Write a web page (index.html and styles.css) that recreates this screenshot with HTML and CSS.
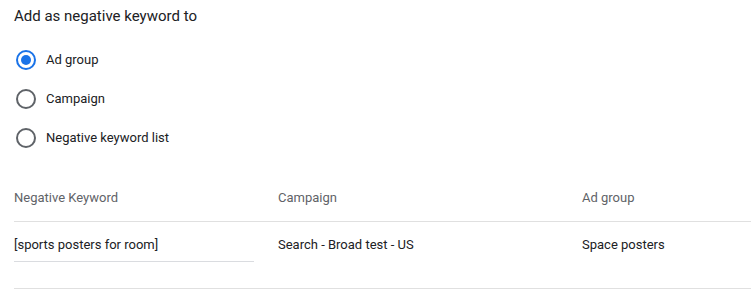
FILE: index.html
```html
<!DOCTYPE html>
<html>

<head>
    <title>Add as negative keyword</title>
    <link rel="stylesheet" href="styles.css">
</head>

<body>
    <div class="panel">
        <h2 class="title">Add as negative keyword to</h2>
        <div class="radio-list">
            <label class="radio-row">
                <span class="radio checked"></span>
                <span class="radio-label">Ad group</span>
            </label>
            <label class="radio-row">
                <span class="radio"></span>
                <span class="radio-label">Campaign</span>
            </label>
            <label class="radio-row">
                <span class="radio"></span>
                <span class="radio-label">Negative keyword list</span>
            </label>
        </div>
        <div class="table">
            <div class="row head">
                <div class="cell">Negative Keyword</div>
                <div class="cell">Campaign</div>
                <div class="cell">Ad group</div>
            </div>
            <div class="row body">
                <div class="cell keyword">
                    <div class="input">[sports posters for room]</div>
                </div>
                <div class="cell">Search - Broad test - US</div>
                <div class="cell">Space posters</div>
            </div>
        </div>
    </div>
</body>

</html>
```

FILE: styles.css
```css
body {
    margin: 0;
    background: #ffffff;
    font-family: Roboto, 'Liberation Sans', sans-serif;
    color: #202124;
}

.panel {
    padding-left: 14px;
}

.title {
    margin: 6px 0 0;
    font-size: 15px;
    font-weight: 400;
    line-height: 20px;
    color: #202124;
}

.radio-list {
    margin-top: 14px;
}

.radio-row {
    display: flex;
    align-items: center;
    height: 39px;
    cursor: pointer;
}

.radio {
    box-sizing: border-box;
    width: 20px;
    height: 20px;
    margin-left: 2px;
    border: 2px solid #5f6368;
    border-radius: 50%;
    display: flex;
    justify-content: center;
    align-items: center;
}

.radio.checked {
    border-color: #1a73e8;
}

.radio.checked::after {
    content: '';
    width: 10px;
    height: 10px;
    border-radius: 50%;
    background-color: #1a73e8;
}

.radio-label {
    margin-left: 10px;
    font-size: 13px;
    color: #202124;
}

.table {
    margin-top: 16px;
}

.row {
    display: grid;
    grid-template-columns: 264px 304px 1fr;
    border-bottom: 1px solid #e0e0e0;
    font-size: 13px;
}

.row.head {
    height: 48px;
    align-items: center;
    color: #5f6368;
}

.row.body {
    height: 66px;
    align-items: start;
}

.row.body .cell {
    padding-top: 14px;
    line-height: 18px;
}

.input {
    width: 240px;
    padding-bottom: 7px;
    border-bottom: 1px solid #dadce0;
}
```
